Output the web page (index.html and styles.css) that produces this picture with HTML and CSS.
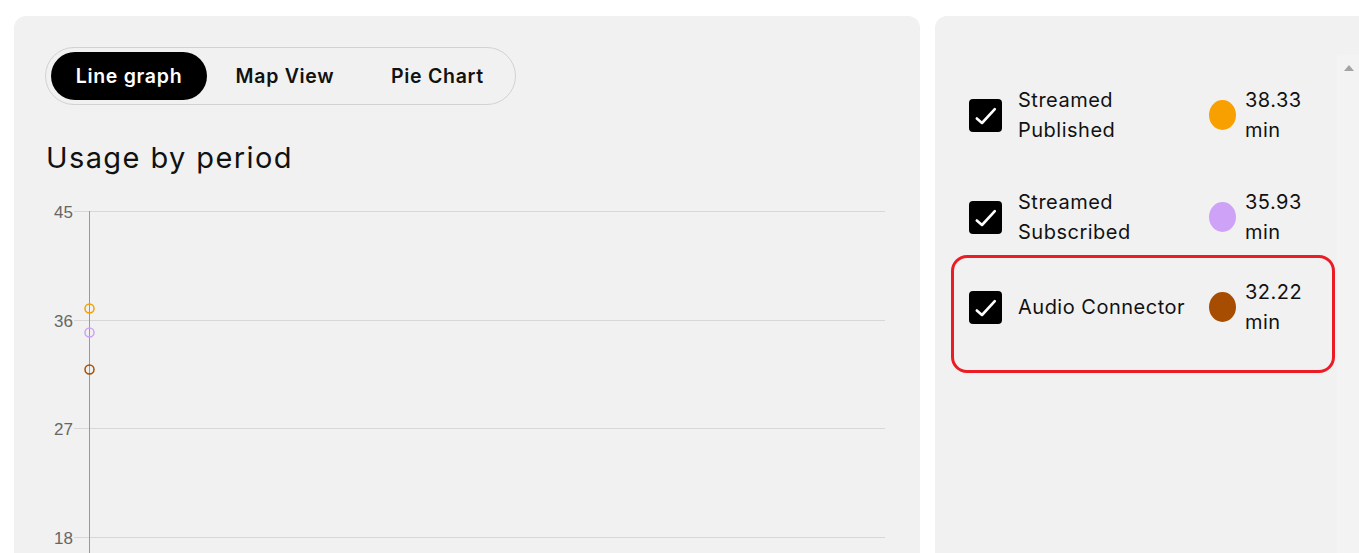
FILE: index.html
```html
<!DOCTYPE html>
<html>
<head>
<meta charset="utf-8">
<link rel="stylesheet" href="styles.css">
</head>
<body>
<div class="page">
  <section class="card chart-card">
    <div class="tabs">
      <button class="tab active">Line graph</button>
      <button class="tab wide">Map View</button>
      <button class="tab last">Pie Chart</button>
    </div>
    <h2 class="title">Usage by period</h2>
    <svg class="chart" width="840" height="360" viewBox="0 0 840 360">
      <g class="grid">
        <line x1="29" y1="16.5" x2="840" y2="16.5"/>
        <line x1="29" y1="125.5" x2="840" y2="125.5"/>
        <line x1="29" y1="233.5" x2="840" y2="233.5"/>
        <line x1="29" y1="342.5" x2="840" y2="342.5"/>
      </g>
      <line class="axis" x1="44.5" y1="16" x2="44.5" y2="360"/>
      <g class="labels">
        <text x="28" y="22.5">45</text>
        <text x="28" y="131.5">36</text>
        <text x="28" y="239.5">27</text>
        <text x="28" y="348.5">18</text>
      </g>
      <circle cx="44.5" cy="113.5" r="4.5" class="pt orange"/>
      <circle cx="44.5" cy="137.5" r="4.5" class="pt lilac"/>
      <circle cx="44.5" cy="174.5" r="4.5" class="pt brown"/>
    </svg>
  </section>
  <section class="card legend-card">
    <div class="legend-scroll">
      <div class="legend-list">
        <div class="item">
          <span class="check"><svg width="33" height="33" viewBox="0 0 33 33"><path d="M7.8 19.5 L13 24 L25.8 10.2" fill="none" stroke="#fff" stroke-width="2.6" stroke-linecap="round" stroke-linejoin="round"/></svg></span>
          <span class="label">Streamed Published</span>
          <span class="dot orange-bg"></span>
          <span class="value">38.33 min</span>
        </div>
        <div class="item">
          <span class="check"><svg width="33" height="33" viewBox="0 0 33 33"><path d="M7.8 19.5 L13 24 L25.8 10.2" fill="none" stroke="#fff" stroke-width="2.6" stroke-linecap="round" stroke-linejoin="round"/></svg></span>
          <span class="label">Streamed Subscribed</span>
          <span class="dot lilac-bg"></span>
          <span class="value">35.93 min</span>
        </div>
        <div class="highlight">
          <div class="item">
            <span class="check"><svg width="33" height="33" viewBox="0 0 33 33"><path d="M7.8 19.5 L13 24 L25.8 10.2" fill="none" stroke="#fff" stroke-width="2.6" stroke-linecap="round" stroke-linejoin="round"/></svg></span>
            <span class="label">Audio Connector</span>
            <span class="dot brown-bg"></span>
            <span class="value">32.22 min</span>
          </div>
        </div>
      </div>
      <div class="scrollbar"><span class="arrow"></span></div>
    </div>
  </section>
</div>
</body>
</html>
```

FILE: styles.css
```css
html, body {
  margin: 0;
  padding: 0;
  background: #fff;
  overflow: hidden;
}
body {
  font-family: Inter, "Noto Sans", sans-serif;
  color: #111;
}
.page {
  display: flex;
  gap: 15px;
  padding: 16px 0 0 14px;
  width: 1400px;
  height: 553px;
  box-sizing: border-box;
}
.card {
  background: #f1f1f1;
  border-radius: 12px 12px 0 0;
  box-sizing: border-box;
}
.chart-card {
  width: 906px;
  height: 537px;
  padding: 31px 0 0 31px;
}
.tabs {
  display: inline-flex;
  align-items: center;
  border: 1px solid #d2d2d2;
  border-radius: 30px;
  padding: 5px;
  height: 58px;
  box-sizing: border-box;
}
.tab {
  font-family: Inter, "Noto Sans", sans-serif;
  font-size: 19.5px;
  font-weight: 600;
  letter-spacing: 0.7px;
  color: #111;
  background: transparent;
  border: 0;
  border-radius: 24px;
  height: 48px;
  padding: 0 26px;
  margin: 0;
  cursor: pointer;
}
.tab.active {
  background: #000;
  color: #fff;
  width: 156px;
  padding: 0;
}
.tab.wide {
  width: 156px;
  padding: 0;
}
.tab.last {
  padding: 0 26px 0 28px;
}
.title {
  margin: 36px 0 0 1px;
  font-size: 29px;
  font-weight: 400;
  line-height: 34px;
  letter-spacing: 1.4px;
}
.chart {
  display: block;
  margin-top: 20px;
}
.grid line {
  stroke: #d7d7d7;
  stroke-width: 1;
}
.axis {
  stroke: #999;
  stroke-width: 1;
}
.labels text {
  font-family: "Liberation Sans", Arial, sans-serif;
  font-size: 17px;
  fill: #666;
  text-anchor: end;
}
.pt {
  fill: none;
  stroke-width: 1.5;
}
.pt.orange { stroke: #f5a000; }
.pt.lilac { stroke: #cda2f6; }
.pt.brown { stroke: #a64d02; }

.legend-card {
  width: 440px;
  height: 537px;
  padding-top: 39px;
}
.legend-scroll {
  display: flex;
}
.legend-list {
  width: 402px;
  padding-top: 30px;
}
.scrollbar {
  width: 22px;
  height: 498px;
  background: #f3f3f3;
  position: relative;
}
.arrow {
  position: absolute;
  left: 7px;
  top: 10px;
  width: 0;
  height: 0;
  border-left: 5.5px solid transparent;
  border-right: 5.5px solid transparent;
  border-bottom: 6px solid #a3a3a3;
}
.item {
  display: grid;
  grid-template-columns: 33px 207px 27px 71px;
  align-items: center;
  margin-left: 34px;
  margin-bottom: 42px;
  font-size: 20px;
  line-height: 30px;
  letter-spacing: 0.5px;
}
.label { padding-left: 16px; }
.value { padding-left: 9px; }
.check {
  width: 33px;
  height: 33px;
  background: #000;
  border-radius: 4px;
}
.check svg { display: block; }
.dot {
  width: 27px;
  height: 30px;
  border-radius: 50%;
}
.orange-bg { background: #f9a001; }
.lilac-bg { background: #cea2f6; }
.brown-bg { background: #a64d02; }
.highlight {
  margin: -34px 0 0 16px;
  width: 384px;
  height: 118px;
  box-sizing: border-box;
  border: 3px solid #ec1c24;
  border-radius: 16px;
  padding-top: 19px;
}
.highlight .item {
  margin: 0 0 0 15px;
}
```
